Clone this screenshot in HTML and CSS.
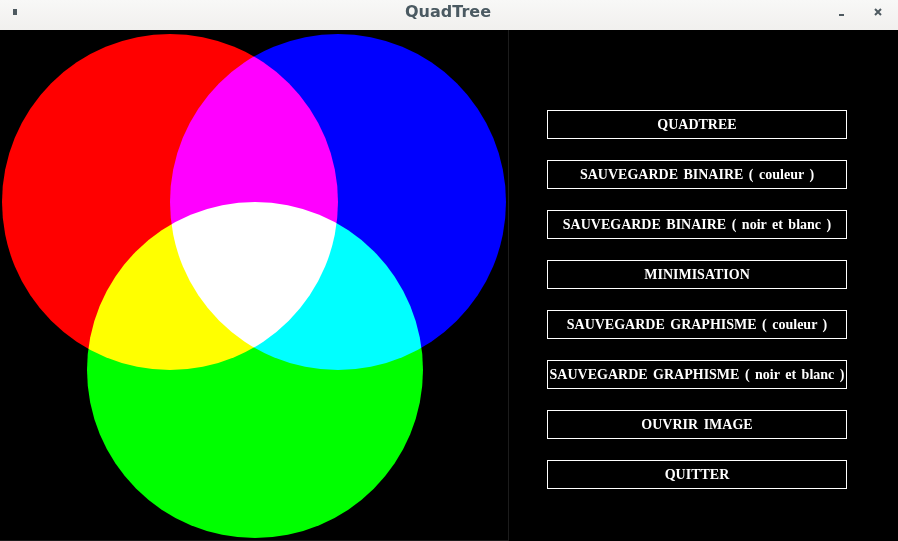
FILE: index.html
```html
<!DOCTYPE html>
<html>
<head>
<meta charset="utf-8">
<link rel="stylesheet" href="styles.css">
</head>
<body>
<div class="window">
  <div class="titlebar">
    <div class="tb-left"><div class="tb-icon"></div></div>
    <div class="tb-title">QuadTree</div>
    <div class="tb-controls">
      <span class="tb-min"></span>
      <svg class="tb-close" width="8" height="8" viewBox="0 0 8 8"><path d="M1 1 L7 7 M7 1 L1 7" stroke="#4e5a60" stroke-width="2"/></svg>
    </div>
  </div>
  <div class="main">
    <div class="canvas">
      <svg width="508" height="510" viewBox="0 0 508 510">
        <rect width="508" height="510" fill="#000"/>
        <g class="blend">
          <circle cx="170" cy="172" r="168" fill="#ff0000"/>
          <circle cx="338" cy="172" r="168" fill="#0000ff"/>
          <circle cx="255" cy="340" r="168" fill="#00ff00"/>
        </g>
      </svg>
    </div>
    <div class="panel">
      <button class="btn">QUADTREE</button>
      <button class="btn">SAUVEGARDE BINAIRE ( couleur )</button>
      <button class="btn">SAUVEGARDE BINAIRE ( noir et blanc )</button>
      <button class="btn">MINIMISATION</button>
      <button class="btn">SAUVEGARDE GRAPHISME ( couleur )</button>
      <button class="btn">SAUVEGARDE GRAPHISME ( noir et blanc )</button>
      <button class="btn">OUVRIR IMAGE</button>
      <button class="btn">QUITTER</button>
    </div>
  </div>
</div>
</body>
</html>
```
FILE: styles.css
```css
html, body {
  margin: 0;
  padding: 0;
  background: #000;
}
.window {
  width: 898px;
  height: 541px;
  display: flex;
  flex-direction: column;
  overflow: hidden;
}
.titlebar {
  height: 30px;
  flex: none;
  background: linear-gradient(#f8f8f7, #f1f0ee);
  display: grid;
  grid-template-columns: 1fr auto 1fr;
  align-items: center;
  box-sizing: border-box;
  padding-bottom: 6px;
}
.tb-left {
  display: flex;
}
.tb-icon {
  width: 4px;
  height: 6px;
  background: #4e5a60;
  margin-left: 13px;
}
.tb-title {
  font-family: "DejaVu Sans", sans-serif;
  font-weight: bold;
  font-size: 16px;
  color: #4b5a62;
  margin-left: -2px;
  line-height: 18px;
}
.tb-controls {
  display: flex;
  justify-content: flex-end;
  align-items: center;
  gap: 30px;
  margin-right: 16px;
}
.tb-min {
  width: 5px;
  height: 2px;
  background: #4e5a60;
  margin-top: 5px;
}
.tb-close {
  display: block;
}
.main {
  flex: 1;
  display: flex;
}
.canvas {
  width: 508px;
  border-right: 1px solid #1c1c1c;
  border-bottom: 1px solid #1c1c1c;
  line-height: 0;
}
.canvas svg {
  display: block;
}
.blend circle {
  mix-blend-mode: screen;
}
.blend {
  isolation: isolate;
}
.panel {
  flex: 1;
  display: flex;
  flex-direction: column;
  padding-top: 80px;
  padding-left: 38px;
  gap: 21px;
}
.btn {
  width: 300px;
  height: 29px;
  box-sizing: border-box;
  background: #000;
  border: 1px solid #fff;
  color: #fff;
  font-family: "Liberation Serif", serif;
  font-weight: bold;
  font-size: 14px;
  word-spacing: 2px;
  padding: 0;
  margin: 0;
  text-align: center;
  white-space: nowrap;
}
```
